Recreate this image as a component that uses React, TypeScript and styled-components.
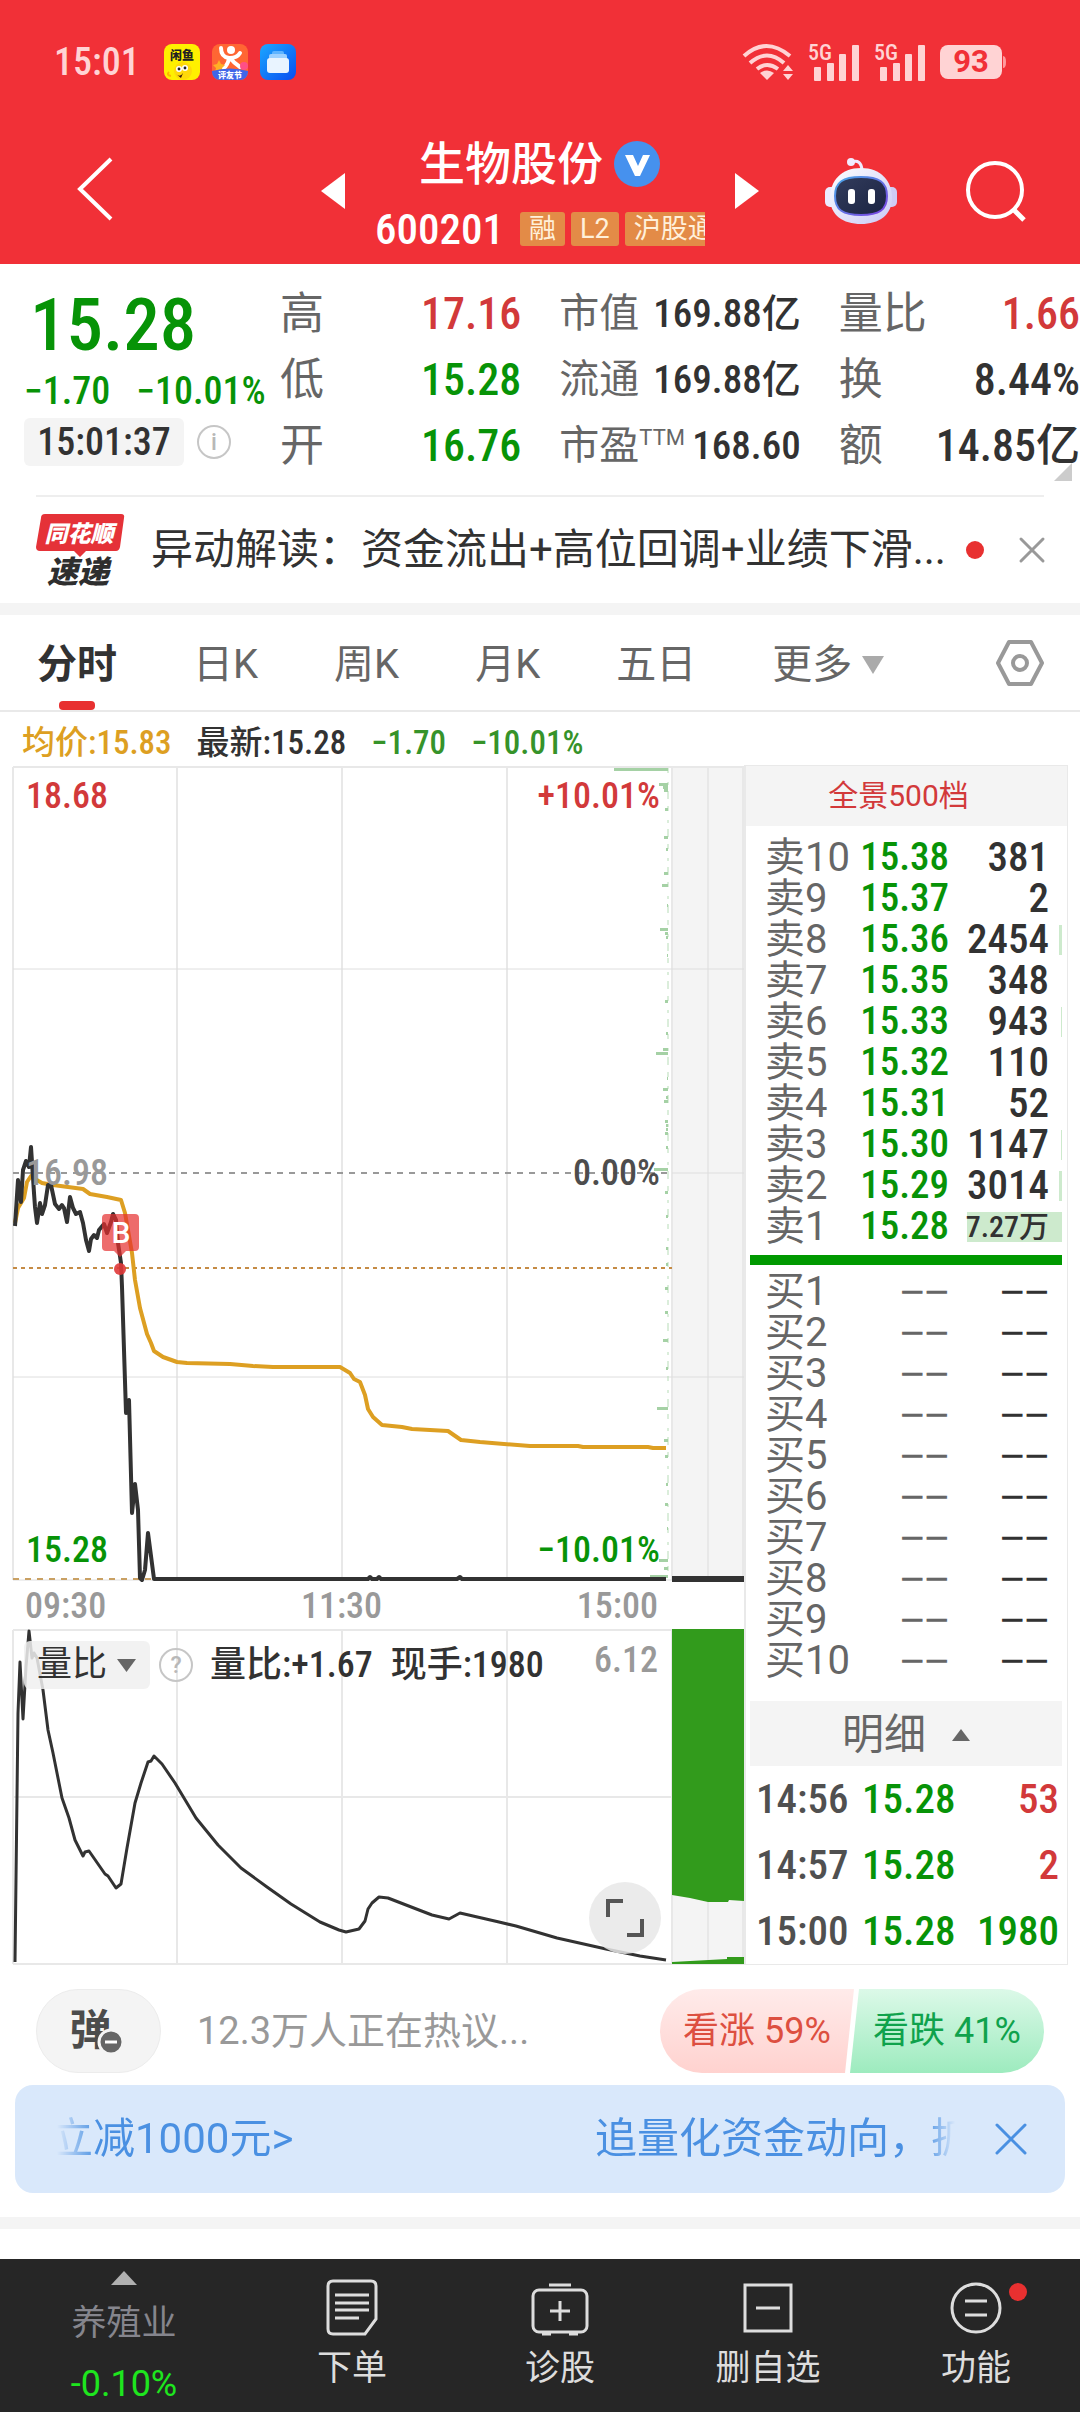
import React from "react";
import styled, { createGlobalStyle, css } from "styled-components";

const cjk = `"Noto Sans CJK SC", sans-serif`;
const numFont = `"Roboto Condensed", "Liberation Sans Narrow", Roboto, ${cjk}`;
const textFont = `Roboto, ${cjk}`;

const c = {
  red: "#f13037",
  up: "#d2393a",
  down: "#079307",
  text: "#323232",
  sub: "#666666",
  mute: "#999999",
  line: "#e9e9e9",
  band: "#f4f4f4",
  avg: "#dd9f22",
};

const Global = createGlobalStyle`
  * { box-sizing: border-box; }
  body { margin: 0; background: #fff; font-family: ${textFont}; color: ${c.text}; }
  button { border: 0; padding: 0; margin: 0; background: none; font: inherit; color: inherit; cursor: pointer; }
  svg { display: block; overflow: visible; }
`;

const Page = styled.main`
  display: flex;
  flex-direction: column;
  min-height: 100vh;
`;

/* ---------- header ---------- */

const Top = styled.header`
  background: ${c.red};
  color: #fff;
`;

const StatusBar = styled.div`
  display: flex;
  align-items: center;
  justify-content: space-between;
  height: 118px;
  padding: 6px 74px 0 54px;
`;

const StatusGroup = styled.div<{ $gap: number }>`
  display: flex;
  align-items: center;
  gap: ${(p) => p.$gap}px;
`;

const Clock = styled.span`
  font: 500 38px/40px ${numFont};
  color: #ffd3d4;
  margin-right: 12px;
`;

const TitleBar = styled.div`
  display: grid;
  grid-template-columns: 1fr auto 1fr;
  align-items: center;
  height: 146px;
`;

const BackSlot = styled.div`
  padding-left: 76px;
`;

const ToolSlot = styled.div`
  display: flex;
  align-items: center;
  justify-content: space-between;
  padding: 0 54px 0 66px;
`;

const Switcher = styled.div`
  display: flex;
  align-items: center;
  gap: 30px;
`;

const StockTitle = styled.div`
  width: 330px;
  padding-top: 9px;
`;

const NameLine = styled.h1`
  display: flex;
  align-items: center;
  justify-content: center;
  gap: 10px;
  margin: 0;
  font: 500 46px/66px ${textFont};
`;

const CodeLine = styled.div`
  display: flex;
  align-items: center;
  gap: 6px;
  height: 64px;
  overflow: hidden;
  white-space: nowrap;
`;

const Code = styled.span`
  font: 500 43px/64px ${numFont};
  margin-right: 10px;
`;

const Tag = styled.span`
  flex: none;
  padding: 0 9px;
  border-radius: 3px;
  background: #e38b47;
  color: #fff0da;
  font: 400 27px/34px ${textFont};
`;

/* ---------- quote ---------- */

const Quote = styled.section`
  position: relative;
  display: flex;
  padding: 17px 0 16px 24px;
`;

const PriceBlock = styled.div`
  flex: 0 0 256px;
  white-space: nowrap;
`;

const Price = styled.div`
  padding-left: 6px;
  font: 500 73px/88px ${numFont};
  color: ${c.down};
`;

const Change = styled.div`
  display: flex;
  gap: 26px;
  font: 500 38px/44px ${numFont};
  color: ${c.down};
`;

const TimeLine = styled.div`
  display: flex;
  align-items: center;
  gap: 12px;
  margin-top: 5px;
`;

const TimeBox = styled.time`
  width: 160px;
  border-radius: 6px;
  background: ${c.band};
  text-align: center;
  font: 500 38px/48px ${numFont};
`;

const Stats = styled.dl`
  flex: 1;
  display: grid;
  grid-template-columns: repeat(3, minmax(0, 1fr));
  grid-auto-rows: 66px;
  column-gap: 38px;
  margin: 0;
`;

const Stat = styled.div`
  display: flex;
  align-items: center;
  justify-content: space-between;
  white-space: nowrap;
`;

const StatName = styled.dt<{ $small?: boolean }>`
  font: 400 ${(p) => (p.$small ? 40 : 44)}px/66px ${textFont};
  color: ${c.sub};
  sup { font-size: 22px; line-height: 1; vertical-align: 14px; }
`;

const StatValue = styled.dd<{ $small?: boolean; $color?: string }>`
  margin: 0;
  font: 500 ${(p) => (p.$small ? 39 : 44)}px/66px ${numFont};
  color: ${(p) => p.$color || c.text};
`;

const Corner = styled.svg`
  position: absolute;
  right: 8px;
  bottom: 14px;
`;

const News = styled.section`
  display: flex;
  align-items: center;
  height: 108px;
  margin: 0 36px;
  border-top: 2px solid #eeeeee;
`;

const NewsText = styled.a`
  flex: 1;
  min-width: 0;
  margin: 0 16px 0 26px;
  overflow: hidden;
  white-space: nowrap;
  font: 400 42px/60px ${textFont};
  color: ${c.text};
  text-decoration: none;
`;

const Dot = styled.span`
  width: 18px;
  height: 18px;
  border-radius: 50%;
  background: #e83030;
`;

const NewsClose = styled.button`
  margin-left: 36px;
`;

const Band = styled.div`
  height: 12px;
  background: ${c.band};
`;

/* ---------- tabs ---------- */

const Tabs = styled.nav`
  display: flex;
  align-items: stretch;
  gap: 76px;
  height: 97px;
  padding: 0 36px 0 37px;
  border-bottom: 2px solid ${c.line};
`;

const Tab = styled.button<{ $active?: boolean }>`
  position: relative;
  display: flex;
  align-items: center;
  gap: 10px;
  padding-top: 4px;
  color: ${c.sub};
  font: 400 40px/60px ${textFont};
  white-space: nowrap;
  ${(p) =>
    p.$active &&
    css`
      color: ${c.text};
      font-weight: 700;
      &::after {
        content: "";
        position: absolute;
        left: 22px;
        bottom: 0;
        width: 36px;
        height: 9px;
        border-radius: 4px;
        background: #e83030;
      }
    `}
`;

const SettingsButton = styled.button`
  margin-left: auto;
`;

const Legend = styled.div`
  display: flex;
  align-items: center;
  gap: 25px;
  height: 53px;
  padding: 8px 22px 0;
  font: 500 33px/44px ${numFont};
`;

const Ink = styled.span<{ $color: string }>`
  color: ${(p) => p.$color};
`;

/* ---------- market area ---------- */

const Market = styled.section`
  display: grid;
  grid-template-columns: minmax(0, 1fr) 324px;
  padding: 0 12px 0 13px;
`;

const Charts = styled.div`
  display: flex;
  flex-direction: column;
`;

const ChartBox = styled.div<{ $h: number }>`
  position: relative;
  height: ${(p) => p.$h}px;
  > svg { width: 100%; height: 100%; }
`;

const ChartLabels = styled.div`
  position: absolute;
  inset: 13px 84px 14px 13px;
  display: flex;
  flex-direction: column;
  justify-content: space-between;
`;

const LabelRow = styled.div`
  display: flex;
  justify-content: space-between;
  font: 500 36px/36px ${numFont};
`;

const Axis = styled.div`
  display: flex;
  justify-content: space-between;
  padding: 4px 86px 0 12px;
  height: 47px;
  font: 500 36px/40px ${numFont};
  color: ${c.mute};
`;

const SubHead = styled.div`
  position: absolute;
  inset: 12px 86px auto 11px;
  display: flex;
  align-items: center;
  gap: 8px;
  font: 500 36px/48px ${numFont};
  white-space: nowrap;
`;

const Picker = styled.label`
  position: relative;
  display: flex;
  align-items: center;
  width: 126px;
  height: 48px;
  border-radius: 6px;
  background: rgba(240, 240, 240, 0.85);
  svg { position: absolute; right: 14px; pointer-events: none; }
`;

const PickerSelect = styled.select`
  appearance: none;
  width: 100%;
  border: 0;
  padding: 0 0 0 13px;
  background: none;
  color: ${c.text};
  font: 400 35px/48px ${textFont};
`;

const SubTexts = styled.div`
  display: flex;
  flex: 1;
  gap: 18px;
  margin-left: 8px;
  span:last-child { margin-left: auto; color: ${c.mute}; line-height: 38px; }
`;

const Expand = styled.button`
  position: absolute;
  right: 83px;
  bottom: 11px;
  display: grid;
  place-items: center;
  width: 72px;
  height: 72px;
  border-radius: 50%;
  background: rgba(232, 232, 232, 0.85);
`;

/* ---------- order book ---------- */

const Book = styled.aside`
  border: 1px solid ${c.line};
  border-left-width: 2px;
`;

const DepthButton = styled.button`
  display: block;
  width: 100%;
  height: 60px;
  background: ${c.band};
  color: ${c.up};
  text-align: center;
  padding-right: 16px;
  font: 400 30px/60px ${textFont};
`;

const BookBody = styled.div`
  padding: 11px 5px 0 4px;
`;

const BookTable = styled.table`
  width: 100%;
  border-collapse: collapse;
  table-layout: fixed;
  td, th { padding: 0; white-space: nowrap; }
`;

const Level = styled.th`
  width: 110px;
  height: 41px;
  padding-left: 15px !important;
  text-align: left;
  font: 400 40px/41px ${textFont};
  color: ${c.sub};
`;

const LevelPrice = styled.td<{ $empty?: boolean }>`
  width: 89px;
  text-align: right;
  font: ${(p) => (p.$empty ? `400 42px/41px "Liberation Sans", sans-serif` : `500 39px/41px ${numFont}`)};
  color: ${(p) => (p.$empty ? c.sub : c.down)};
`;

const LevelQty = styled.td<{ $empty?: boolean; $small?: boolean }>`
  position: relative;
  padding-right: 13px !important;
  text-align: right;
  font: ${(p) => (p.$empty ? `400 42px/41px "Liberation Sans", sans-serif` : `500 ${p.$small ? 30 : 41}px/41px ${numFont}`)};
`;

const DepthBar = styled.span`
  position: absolute;
  z-index: -1;
  top: 6px;
  bottom: 5px;
  right: 0;
  background: #cdeacd;
`;

const Split = styled.div`
  height: 10px;
  margin: 8px 0 6px;
  background: #009900;
`;

const DetailButton = styled.button`
  display: flex;
  align-items: center;
  justify-content: center;
  gap: 26px;
  width: 100%;
  height: 65px;
  margin-top: 20px;
  padding-top: 3px;
  background: ${c.band};
  color: ${c.sub};
  font: 400 42px/60px ${textFont};
`;

const TradeCell = styled.td<{ $color: string; $align?: string }>`
  height: 66px;
  text-align: ${(p) => p.$align || "left"};
  color: ${(p) => p.$color};
  font: 500 41px/66px ${numFont};
  &:first-child { width: 112px; padding-left: 6px; }
  &:nth-child(2) { width: 94px; }
  &:last-child { padding-right: 3px; }
`;

/* ---------- talk + banner ---------- */

const Talk = styled.section`
  display: flex;
  align-items: center;
  padding: 24px 36px 12px;
`;

const Barrage = styled.button`
  position: relative;
  flex: none;
  width: 125px;
  height: 84px;
  padding-right: 16px;
  border: 1px solid #ececec;
  border-radius: 42px;
  background: ${c.band};
  font: 700 42px/78px ${textFont};
  color: #4c4c4c;
  svg { position: absolute; left: 61px; top: 39px; }
`;

const TalkInput = styled.input`
  flex: 1;
  min-width: 0;
  margin-left: 36px;
  border: 0;
  padding: 0;
  outline: 0;
  background: none;
  font: 400 38px/56px ${textFont};
  &::placeholder { color: ${c.mute}; opacity: 1; }
`;

const Vote = styled.button<{ $side: "up" | "down" }>`
  flex: none;
  width: 194px;
  height: 84px;
  font: 400 36px/84px ${textFont};
  ${(p) =>
    p.$side === "up"
      ? css`
          color: #dd4f40;
          border-radius: 42px 0 0 42px;
          background: linear-gradient(#ffebea, #ffd2cf);
          clip-path: polygon(0 0, 100% 0, calc(100% - 9px) 100%, 0 100%);
        `
      : css`
          margin-left: -4px;
          color: #0fa24c;
          border-radius: 0 42px 42px 0;
          background: linear-gradient(#dcf9e8, #9debbe);
          clip-path: polygon(9px 0, 100% 0, 100% 100%, 0 100%);
        `}
`;

const Banner = styled.section`
  display: flex;
  align-items: center;
  height: 108px;
  margin: 0 15px 24px;
  padding: 0 39px 0 42px;
  border-radius: 18px;
  background: #d9e8fb;
  color: #4a90e2;
`;

const Marquee = styled.div`
  flex: 1;
  min-width: 0;
  display: flex;
  overflow: hidden;
  white-space: nowrap;
  font: 400 42px/60px ${textFont};
  mask-image: linear-gradient(to right, transparent, #000 40px, #000 calc(100% - 30px), transparent);
  span:first-child { flex: 0 0 544px; margin-left: -6px; }
`;

const BannerClose = styled.button`
  margin-left: 41px;
`;

/* ---------- bottom bar ---------- */

const Rest = styled.div`
  flex: 1;
  min-height: 30px;
`;

const BottomBar = styled.nav`
  display: grid;
  grid-template-columns: 248fr repeat(4, 208fr);
  height: 153px;
  background: #262626;
  color: #dddddd;
`;

const NavItem = styled.button`
  position: relative;
  display: flex;
  flex-direction: column;
  align-items: center;
  padding-top: 19px;
  font: 400 35px/48px ${textFont};
  svg { margin-bottom: 7px; }
`;

const Sector = styled(NavItem)`
  padding: 12px 0 0;
  color: #85858d;
  line-height: 60px;
  svg { margin-bottom: 9px; }
`;

const SectorChange = styled.span`
  color: #1ee61e;
  font-size: 36px;
`;

const NavDot = styled(Dot)`
  position: absolute;
  left: calc(50% + 33px);
  top: 24px;
`;

/* ---------- data ---------- */

const stats: { name: string; sup?: string; value: string; color?: string; small?: boolean }[] = [
  { name: "高", value: "17.16", color: c.up },
  { name: "市值", value: "169.88亿", small: true },
  { name: "量比", value: "1.66", color: c.up },
  { name: "低", value: "15.28", color: c.down },
  { name: "流通", value: "169.88亿", small: true },
  { name: "换", value: "8.44%" },
  { name: "开", value: "16.76", color: c.down },
  { name: "市盈", sup: "TTM", value: "168.60", small: true },
  { name: "额", value: "14.85亿" },
];

const asks: [string, string, string, number][] = [
  ["卖10", "15.38", "381", 0],
  ["卖9", "15.37", "2", 0],
  ["卖8", "15.36", "2454", 3],
  ["卖7", "15.35", "348", 0],
  ["卖6", "15.33", "943", 1],
  ["卖5", "15.32", "110", 0],
  ["卖4", "15.31", "52", 0],
  ["卖3", "15.30", "1147", 1],
  ["卖2", "15.29", "3014", 3],
  ["卖1", "15.28", "7.27万", 95],
];

const trades: [string, string, string, string][] = [
  ["14:56", "15.28", "53", c.up],
  ["14:57", "15.28", "2", c.up],
  ["15:00", "15.28", "1980", c.down],
];

const priceLine =
  "15,1226 18,1180 21,1202 23,1170 26,1161 29,1167 31,1147 34,1193 35,1207 37,1223 40,1203 42,1214 45,1205 48,1185 51,1185 55,1204 59,1209 62,1205 64,1208 67,1222 70,1197 73,1208 76,1214 80,1212 83,1223 86,1240 89,1251 91,1239 94,1235 97,1238 99,1230 104,1224 107,1233 111,1222 113,1214 116,1220 118,1243 121,1263 122,1287 126,1413 129,1400 132,1513 135,1484 138,1510 140,1578 142,1580 145,1570 148,1533 154,1579 368,1579 370,1577 372,1579 377,1579 379,1577 381,1579 457,1579 460,1577 462,1579 666,1579";

const avgLine =
  "15,1223 18,1208 24,1198 27,1182 31,1176 35,1179 42,1183 53,1185 83,1189 90,1194 107,1197 121,1200 125,1213 132,1253 135,1280 140,1308 147,1334 151,1343 154,1351 163,1357 177,1362 187,1363 230,1364 253,1366 273,1367 340,1367 350,1373 354,1379 360,1382 365,1395 368,1409 373,1417 382,1425 402,1427 412,1429 448,1431 461,1440 480,1442 530,1446 578,1446 583,1447 648,1447 653,1448 666,1448";

const ratioLine =
  "15,1962 18,1713 20,1662 23,1719 26,1667 29,1631 32,1658 34,1653 37,1658 43,1690 48,1730 53,1753 62,1798 69,1818 75,1840 83,1856 85,1852 89,1851 105,1874 108,1876 116,1888 121,1884 127,1848 135,1803 141,1783 148,1762 151,1761 154,1756 162,1764 175,1783 196,1818 218,1845 241,1868 267,1887 291,1904 320,1922 339,1930 346,1932 359,1929 365,1921 368,1909 372,1903 379,1897 388,1898 419,1910 432,1915 449,1919 460,1913 499,1922 516,1926 557,1938 606,1949 640,1956 666,1960";

const ticks: [number, number][] = [
  [769, 54], [784, 9], [787, 5], [790, 4], [809, 3], [837, 4], [849, 2], [873, 4], [885, 6], [905, 1], [929, 8],
  [933, 3], [937, 2], [955, 1], [1001, 3], [1033, 2], [1049, 5], [1053, 12], [1078, 1], [1089, 5], [1097, 2],
  [1101, 4], [1121, 3], [1125, 2], [1129, 2], [1133, 3], [1147, 2], [1169, 14], [1192, 3], [1216, 2], [1248, 2],
  [1264, 2], [1288, 3], [1312, 3], [1340, 5], [1368, 2], [1408, 11], [1440, 4], [1456, 3], [1484, 2], [1504, 3],
  [1528, 1], [1560, 9], [1568, 4], [1576, 18],
];

/* ---------- drawings ---------- */

const Cross = ({ size, color }: { size: number; color: string }) => (
  <svg width={size} height={size} viewBox={`0 0 ${size} ${size}`} stroke={color} strokeWidth="3" strokeLinecap="round">
    <path d={`M1 1 ${size - 1} ${size - 1}M${size - 1} 1 1 ${size - 1}`} />
  </svg>
);

const Triangle = ({ w, h, dir, color }: { w: number; h: number; dir: "up" | "down" | "left" | "right"; color: string }) => {
  const pts = {
    up: `0,${h} ${w},${h} ${w / 2},0`,
    down: `0,0 ${w},0 ${w / 2},${h}`,
    left: `${w},0 ${w},${h} 0,${h / 2}`,
    right: `0,0 0,${h} ${w},${h / 2}`,
  }[dir];
  return (
    <svg width={w} height={h} viewBox={`0 0 ${w} ${h}`}>
      <polygon points={pts} fill={color} />
    </svg>
  );
};

const AppXianyu = () => (
  <svg width="36" height="36" viewBox="0 0 36 36">
    <rect width="36" height="36" rx="8" fill="#fff000" />
    <text x="18" y="16" textAnchor="middle" fontSize="12" fontWeight="900" fontFamily="Noto Sans CJK SC" fill="#222">闲鱼</text>
    <circle cx="19" cy="27" r="9" fill="#ffd90a" />
    <path d="M5 28q-3 3 2 4" stroke="#ffb400" strokeWidth="2" fill="none" />
    <circle cx="15" cy="25" r="3" fill="#fff" /><circle cx="21" cy="24" r="3" fill="#fff" />
    <circle cx="15" cy="25" r="1.4" fill="#222" /><circle cx="21" cy="24" r="1.4" fill="#222" />
    <path d="M12 30q4 4 7-1l-2 5z" fill="#3a1608" />
  </svg>
);

const AppDianping = () => (
  <svg width="36" height="36" viewBox="0 0 36 36">
    <defs><clipPath id="dp"><rect width="36" height="36" rx="8" /></clipPath></defs>
    <g clipPath="url(#dp)">
      <rect width="36" height="36" fill="#ff6633" />
      <circle cx="19" cy="6" r="4" fill="#fff" />
      <path d="M9 4q0 9 8 10-1 7-6 11M28 9q-3 5-10 5 4 5 10 9" fill="none" stroke="#fff" strokeWidth="4" strokeLinecap="round" />
      <path d="m7 16 2 4 4 1-3 3 1 4-4-2-4 2 1-4-3-3 4-1z" fill="#ffae25" />
      <circle cx="32" cy="22" r="4" fill="#ff4f86" />
      <path d="M0 27q18-5 36 0v9H0z" fill="#4166e8" />
      <text x="18" y="34" textAnchor="middle" fontSize="8" fontWeight="900" fontFamily="Noto Sans CJK SC" fill="#fff">评友节</text>
    </g>
  </svg>
);

const AppWallet = () => (
  <svg width="36" height="36" viewBox="0 0 36 36">
    <defs><linearGradient id="wl" x2="1" y2="1"><stop stopColor="#1aa7ff" /><stop offset="1" stopColor="#0a4df0" /></linearGradient></defs>
    <rect width="36" height="36" rx="8" fill="url(#wl)" />
    <rect x="12" y="7" width="12" height="6" rx="2" fill="#5fb4ff" />
    <rect x="9" y="10" width="18" height="8" rx="2" fill="#9dd0ff" />
    <rect x="7" y="14" width="22" height="15" rx="3" fill="#e9f4ff" />
  </svg>
);

const Wifi = () => (
  <svg width="51" height="36" viewBox="0 0 51 36" fill="none" stroke="#ffd3d4" strokeWidth="4">
    <path d="M2 12q22-20 46 0M8 19q17-15 34 0M15 25q10-8 21 0" />
    <path d="m25 36-7-7q7-5 14 0z" fill="#ffd3d4" stroke="none" />
    <path d="m46 21 5 6H41zM46 36l5-6H41z" fill="#ffd3d4" stroke="none" />
  </svg>
);

const Signal = () => (
  <svg width="51" height="37" viewBox="0 0 51 37" fill="#ffd3d4">
    <text x="0" y="16" fontSize="22" fontWeight="500" fontFamily="Roboto Condensed, Liberation Sans Narrow, Roboto">5G</text>
    <rect x="6" y="23" width="7" height="14" rx="1" /><rect x="19" y="19" width="7" height="18" rx="1" />
    <rect x="31" y="10" width="7" height="27" rx="1" /><rect x="44" y="1" width="7" height="36" rx="1" />
  </svg>
);

const Battery = () => (
  <svg width="66" height="34" viewBox="0 0 66 34">
    <rect width="62" height="34" rx="8" fill="#ffd3d4" />
    <path d="M63 11q3 0 3 6t-3 6z" fill="#ff9a9d" />
    <text x="31" y="27" textAnchor="middle" fontSize="31" fontWeight="700" fontFamily="Roboto" fill={c.red}>93</text>
  </svg>
);

const Robot = () => (
  <svg width="72" height="68" viewBox="0 0 72 68">
    <defs>
      <linearGradient id="rb" x2="1" y2="1"><stop stopColor="#fff" /><stop offset="1" stopColor="#c9c9f5" /></linearGradient>
      <linearGradient id="rf" x2="1" y2="1"><stop stopColor="#333c5c" /><stop offset="1" stopColor="#1a2342" /></linearGradient>
      <linearGradient id="re" x2="1" y2="1"><stop stopColor="#49a9e8" /><stop offset="1" stopColor="#7a3fe0" /></linearGradient>
    </defs>
    <path d="M27 5q9-3 10 8" fill="none" stroke="#efeaff" strokeWidth="3" />
    <circle cx="26" cy="5" r="4" fill="#f1ecff" />
    <rect x="0" y="30" width="12" height="20" rx="5" fill="#eceaff" />
    <rect x="60" y="30" width="12" height="20" rx="5" fill="#cfccf5" />
    <path d="M36 11C56 11 67 24 67 41S54 67 36 67 5 58 5 41 16 11 36 11z" fill="url(#rb)" />
    <path d="M36 20C54 20 62 25 62 39S54 58 36 58 10 53 10 39 18 20 36 20z" fill="url(#rf)" stroke="url(#re)" strokeWidth="2" />
    <rect x="23" y="32" width="7" height="15" rx="3" fill="#fff" /><rect x="43" y="32" width="7" height="15" rx="3" fill="#fff" />
  </svg>
);

const NewsLogo = () => (
  <svg width="89" height="72" viewBox="0 0 89 72" fontFamily="Noto Sans CJK SC" fontWeight="900" fontStyle="italic" textAnchor="middle">
    <path d="M9 0h76q4 0 3 4l-4 29q-1 4-4 4H50l-6 6-6-6H4q-4 0-4-4L5 4q0-4 4-4z" fill="#e53238" />
    <text x="43" y="28" fontSize="23" fill="#fff">同花顺</text>
    <text x="42" y="69" fontSize="31" fill="#2e2e2e">速递</text>
  </svg>
);

const InfoMark = ({ char }: { char: string }) => (
  <svg width="36" height="36" viewBox="0 0 36 36">
    <circle cx="18" cy="18" r="16" fill="none" stroke="#c6c6c6" strokeWidth="2" />
    <text x="18" y="26" textAnchor="middle" fontSize="23" fontWeight="500" fontFamily="Roboto" fill="#b8b8b8">{char}</text>
  </svg>
);

const MainChart = () => (
  <svg viewBox="13 765 731 817" preserveAspectRatio="none" fill="none">
    <rect x="672" y="766" width="72" height="814" fill="#f4f4f4" />
    <path d="M13 767H744M13 767V1580M177 767V1580M342 767V1580M507 767V1580M672 767V1580M708 767V1580M743 767V1580" stroke="#e8e8e8" strokeWidth="2" />
    <path d="M13 969H744M13 1377H744M672 1173H744M13 1580H672" stroke="#dedede" />
    <path d="M13 1173H672" stroke="#999" strokeWidth="2" strokeDasharray="6 6" />
    <path d="M13 1268H672" stroke="#c58b45" strokeWidth="2" strokeDasharray="4 4" />
    <path d="M13 1579H154" stroke="#c9a063" strokeWidth="2" strokeDasharray="6 6" />
    <path d="M668 768V1578" stroke="#b7dcb7" strokeDasharray="5 9 3 6 8 7" />
    {ticks.map(([y, len]) => (
      <rect key={y} x={668 - len} y={y - 1} width={len} height="3" fill="#a5d1a5" />
    ))}
    <polyline points={avgLine} stroke={c.avg} strokeWidth="4" strokeLinejoin="round" />
    <polyline points={priceLine} stroke="#323232" strokeWidth="4" strokeLinejoin="round" />
    <path d="M672 1579H744" stroke="#323232" strokeWidth="6" />
    <path d="M106 1214h29q4 0 4 4v29q0 4-4 4h-9l-6 6-6-6h-8q-4 0-4-4v-29q0-4 4-4z" fill="#e62e2e" fillOpacity=".7" />
    <circle cx="120" cy="1269" r="6" fill="#e03838" fillOpacity=".9" />
    <text x="121" y="1243" textAnchor="middle" fontSize="30" fontWeight="500" fontFamily="Roboto" fill="#fff">B</text>
  </svg>
);

const RatioChart = () => (
  <svg viewBox="13 1629 731 336" preserveAspectRatio="none" fill="none">
    <rect x="672" y="1630" width="72" height="334" fill="#f4f4f4" />
    <path d="M13 1630H744M13 1797H672M13 1964H744M13 1630V1964M177 1630V1964M342 1630V1964M507 1630V1964M672 1630V1964M708 1630V1964M743 1630V1964" stroke="#e8e8e8" strokeWidth="2" />
    <path d="M672 1629H744V1901L729 1900 728 1902H708L690 1898 672 1895z" fill="#329b1c" />
    <path d="M672 1964V1962L727 1959V1957H744V1964z" fill="#329b1c" />
    <polyline points={ratioLine} stroke="#323232" strokeWidth="3" strokeLinejoin="round" />
  </svg>
);

const dash = "−−";

export default function App() {
  return (
    <Page>
      <Global />
      <Top>
        <StatusBar>
          <StatusGroup $gap={12}>
            <Clock>15:01</Clock>
            <AppXianyu />
            <AppDianping />
            <AppWallet />
          </StatusGroup>
          <StatusGroup $gap={15}>
            <Wifi />
            <Signal />
            <Signal />
            <Battery />
          </StatusGroup>
        </StatusBar>
        <TitleBar>
          <BackSlot>
            <button aria-label="返回">
              <svg width="38" height="64" viewBox="0 0 38 64" fill="none" stroke="#fff" strokeWidth="4">
                <path d="M35 2 4 32l31 30" />
              </svg>
            </button>
          </BackSlot>
          <Switcher>
            <button aria-label="上一只"><Triangle w={24} h={36} dir="left" color="#fff" /></button>
            <StockTitle>
              <NameLine>
                生物股份
                <svg width="48" height="48" viewBox="0 0 48 48">
                  <circle cx="24" cy="24" r="23" fill="#4691ee" />
                  <path d="M12 15h8l5 11 5-11h7L27 36h-5z" fill="#fff" />
                </svg>
              </NameLine>
              <CodeLine>
                <Code>600201</Code>
                <Tag>融</Tag>
                <Tag>L2</Tag>
                <Tag>沪股通</Tag>
              </CodeLine>
            </StockTitle>
            <button aria-label="下一只"><Triangle w={24} h={36} dir="right" color="#fff" /></button>
          </Switcher>
          <ToolSlot>
            <button aria-label="智能助手"><Robot /></button>
            <button aria-label="搜索">
              <svg width="60" height="60" viewBox="0 0 60 60" fill="none" stroke="#fff" strokeWidth="4">
                <circle cx="29" cy="29" r="27" />
                <path d="m47 48 11 11" strokeWidth="5" />
              </svg>
            </button>
          </ToolSlot>
        </TitleBar>
      </Top>

      <Quote>
        <PriceBlock>
          <Price>15.28</Price>
          <Change><span>−1.70</span><span>−10.01%</span></Change>
          <TimeLine>
            <TimeBox>15:01:37</TimeBox>
            <InfoMark char="i" />
          </TimeLine>
        </PriceBlock>
        <Stats>
          {stats.map((s) => (
            <Stat key={s.name}>
              <StatName $small={s.small}>{s.name}{s.sup && <sup>{s.sup}</sup>}</StatName>
              <StatValue $small={s.small} $color={s.color}>{s.value}</StatValue>
            </Stat>
          ))}
        </Stats>
        <Corner width="18" height="18" viewBox="0 0 18 18"><path d="M18 0v18H0z" fill="#ccc" /></Corner>
      </Quote>

      <News>
        <NewsLogo />
        <NewsText href="#news">异动解读：资金流出+高位回调+业绩下滑...</NewsText>
        <Dot />
        <NewsClose aria-label="关闭资讯"><Cross size={24} color="#999" /></NewsClose>
      </News>
      <Band />

      <Tabs>
        <Tab $active>分时</Tab>
        <Tab>日K</Tab>
        <Tab>周K</Tab>
        <Tab>月K</Tab>
        <Tab>五日</Tab>
        <Tab>更多<Triangle w={22} h={18} dir="down" color="#aaa" /></Tab>
        <SettingsButton aria-label="图表设置">
          <svg width="48" height="48" viewBox="0 0 48 48" fill="none" stroke="#999" strokeWidth="4" strokeLinejoin="round">
            <path d="M13 3h22l11 21-11 21H13L2 24z" />
            <circle cx="24" cy="24" r="7" />
          </svg>
        </SettingsButton>
      </Tabs>

      <Legend>
        <Ink $color={c.avg}>均价:15.83</Ink>
        <Ink $color={c.text}>最新:15.28</Ink>
        <Ink $color="#36932a">−1.70</Ink>
        <Ink $color="#36932a">−10.01%</Ink>
      </Legend>

      <Market>
        <Charts>
          <ChartBox $h={817}>
            <MainChart />
            <ChartLabels>
              <LabelRow><Ink $color={c.up}>18.68</Ink><Ink $color={c.up}>+10.01%</Ink></LabelRow>
              <LabelRow><Ink $color={c.mute}>16.98</Ink><Ink $color="#4d4d4d">0.00%</Ink></LabelRow>
              <LabelRow><Ink $color={c.down}>15.28</Ink><Ink $color={c.down}>−10.01%</Ink></LabelRow>
            </ChartLabels>
          </ChartBox>
          <Axis><span>09:30</span><span>11:30</span><span>15:00</span></Axis>
          <ChartBox $h={336}>
            <RatioChart />
            <SubHead>
              <Picker>
                <PickerSelect aria-label="指标"><option>量比</option></PickerSelect>
                <Triangle w={19} h={13} dir="down" color="#666" />
              </Picker>
              <button aria-label="指标说明"><InfoMark char="?" /></button>
              <SubTexts>
                <span>量比:+1.67</span>
                <span>现手:1980</span>
                <span>6.12</span>
              </SubTexts>
            </SubHead>
            <Expand aria-label="全屏">
              <svg width="38" height="38" viewBox="0 0 38 38" fill="none" stroke="#555" strokeWidth="4">
                <path d="M2 18V2h15M36 20v16H21" />
              </svg>
            </Expand>
          </ChartBox>
        </Charts>

        <Book>
          <DepthButton>全景500档</DepthButton>
          <BookBody>
            <BookTable>
              <tbody>
                {asks.map(([name, price, qty, bar]) => (
                  <tr key={name}>
                    <Level scope="row">{name}</Level>
                    <LevelPrice>{price}</LevelPrice>
                    <LevelQty $small={qty.endsWith("万")}>
                      <DepthBar style={{ width: bar }} />
                      {qty}
                    </LevelQty>
                  </tr>
                ))}
              </tbody>
            </BookTable>
            <Split />
            <BookTable>
              <tbody>
                {Array.from({ length: 10 }, (_, i) => (
                  <tr key={i}>
                    <Level scope="row">买{i + 1}</Level>
                    <LevelPrice $empty>{dash}</LevelPrice>
                    <LevelQty $empty>{dash}</LevelQty>
                  </tr>
                ))}
              </tbody>
            </BookTable>
            <DetailButton>明细<Triangle w={18} h={12} dir="up" color="#666" /></DetailButton>
            <BookTable>
              <tbody>
                {trades.map(([time, price, qty, color]) => (
                  <tr key={time}>
                    <TradeCell $color="#505050">{time}</TradeCell>
                    <TradeCell $color={c.down}>{price}</TradeCell>
                    <TradeCell $color={color} $align="right">{qty}</TradeCell>
                  </tr>
                ))}
              </tbody>
            </BookTable>
          </BookBody>
        </Book>
      </Market>

      <Talk>
        <Barrage aria-label="弹幕">
          弹
          <svg width="26" height="26" viewBox="0 0 26 26">
            <circle cx="13" cy="13" r="12" fill="#666" stroke="#f4f4f4" strokeWidth="3" />
            <path d="M7 13h12" stroke="#fff" strokeWidth="3" />
          </svg>
        </Barrage>
        <TalkInput aria-label="发表讨论" placeholder="12.3万人正在热议..." />
        <Vote $side="up">看涨 59%</Vote>
        <Vote $side="down">看跌 41%</Vote>
      </Talk>

      <Banner>
        <Marquee>
          <span>立减1000元&gt;</span>
          <span>追量化资金动向，抓</span>
        </Marquee>
        <BannerClose aria-label="关闭广告"><Cross size={30} color="#4a90e2" /></BannerClose>
      </Banner>
      <Band />
      <Rest />

      <BottomBar>
        <Sector>
          <Triangle w={26} h={14} dir="up" color="#b0b0b0" />
          养殖业
          <SectorChange>-0.10%</SectorChange>
        </Sector>
        <NavItem>
          <svg width="60" height="60" viewBox="0 0 60 60" fill="none" stroke="#ddd" strokeWidth="3">
            <path d="M11 3h38q5 0 5 5v33L43 56H11q-5 0-5-5V8q0-5 5-5z" />
            <path d="M13 17h34M13 25h34M13 32h34M13 40h24" />
          </svg>
          下单
        </NavItem>
        <NavItem>
          <svg width="60" height="60" viewBox="0 0 60 60" fill="none" stroke="#ddd" strokeWidth="3">
            <rect x="3" y="12" width="54" height="42" rx="6" />
            <path d="M19 7h22M12 56h9M39 56h9M30 23v20M20 33h20" />
          </svg>
          诊股
        </NavItem>
        <NavItem>
          <svg width="60" height="60" viewBox="0 0 60 60" fill="none" stroke="#ddd" strokeWidth="3">
            <path d="M7 7h46v46H7zM18 30h24" />
          </svg>
          删自选
        </NavItem>
        <NavItem>
          <svg width="60" height="60" viewBox="0 0 60 60" fill="none" stroke="#ddd" strokeWidth="3">
            <circle cx="30" cy="30" r="24" />
            <path d="M19 23h22M19 37h22" />
          </svg>
          功能
          <NavDot />
        </NavItem>
      </BottomBar>
    </Page>
  );
}
